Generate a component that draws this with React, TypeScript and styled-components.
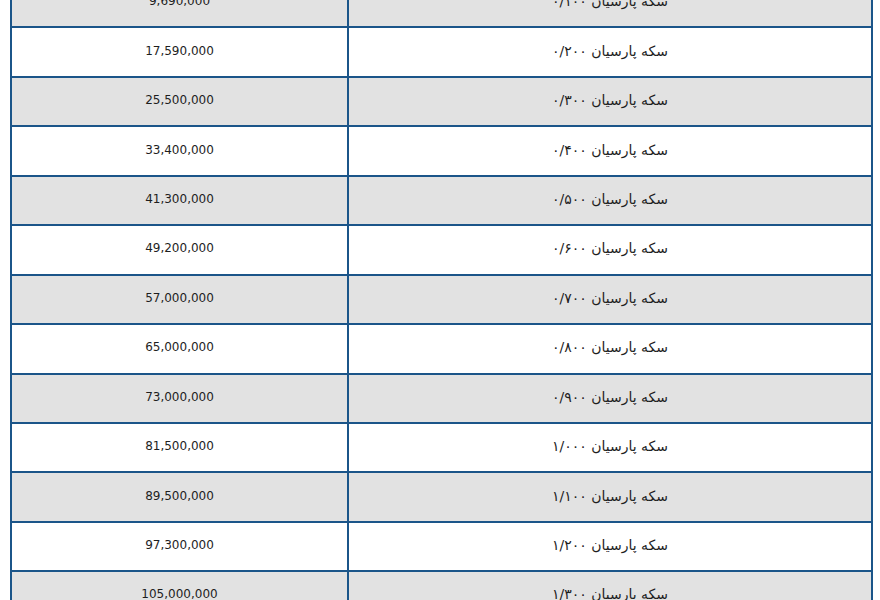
import styled, { createGlobalStyle } from "styled-components";

const GlobalStyle = createGlobalStyle`
  html, body {
    margin: 0;
    padding: 0;
    background: #ffffff;
    overflow: hidden;
  }
`;

const Page = styled.div`
  padding: 0 7px 0 10px;
  margin-top: -23px;
`;

const PriceTable = styled.table`
  width: 863px;
  border-collapse: collapse;
  table-layout: fixed;
  font-family: Tahoma, "DejaVu Sans", "Liberation Sans", sans-serif;
  font-size: 12px;
  color: #1e1e1e;
`;

const Row = styled.tr<{ $shaded: boolean }>`
  background: ${({ $shaded }) => ($shaded ? "#e2e2e2" : "#ffffff")};
`;

const Cell = styled.td`
  height: 44.45px;
  padding: 0 0 3px;
  border: 2px solid #1b5589;
  text-align: center;
  vertical-align: middle;
`;

const PriceCell = styled(Cell)`
  width: 335px;
`;

const NameCell = styled(Cell)`
  font-size: 14px;
`;

type Coin = { price: string; weight: string };

const coins: Coin[] = [
  { price: "9,690,000", weight: "۰/۱۰۰" },
  { price: "17,590,000", weight: "۰/۲۰۰" },
  { price: "25,500,000", weight: "۰/۳۰۰" },
  { price: "33,400,000", weight: "۰/۴۰۰" },
  { price: "41,300,000", weight: "۰/۵۰۰" },
  { price: "49,200,000", weight: "۰/۶۰۰" },
  { price: "57,000,000", weight: "۰/۷۰۰" },
  { price: "65,000,000", weight: "۰/۸۰۰" },
  { price: "73,000,000", weight: "۰/۹۰۰" },
  { price: "81,500,000", weight: "۱/۰۰۰" },
  { price: "89,500,000", weight: "۱/۱۰۰" },
  { price: "97,300,000", weight: "۱/۲۰۰" },
  { price: "105,000,000", weight: "۱/۳۰۰" },
];

export default function App() {
  return (
    <>
      <GlobalStyle />
      <Page>
        <PriceTable>
          <tbody>
            {coins.map((coin, i) => (
              <Row key={coin.weight} $shaded={i % 2 === 0}>
                <PriceCell>{coin.price}</PriceCell>
                <NameCell dir="rtl">سکه پارسیان {coin.weight}</NameCell>
              </Row>
            ))}
          </tbody>
        </PriceTable>
      </Page>
    </>
  );
}
